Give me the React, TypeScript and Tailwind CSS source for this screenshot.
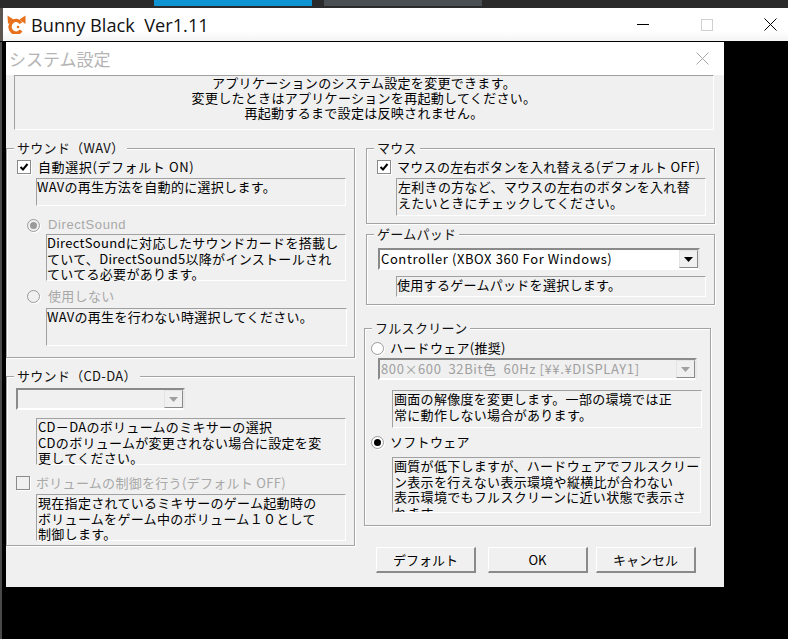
const font = { fontFamily: '"Noto Sans CJK JP", "Liberation Sans", sans-serif' };

function Logo() {
  return (
    <svg width="19" height="19" viewBox="0 0 19 19" className="-mt-[1px] shrink-0">
      <path d="M0.5 0.5 L6.5 4.5 L1 9 Z" fill="#e8701a" />
      <path d="M18.5 0.5 L18.5 9 L12.5 4.5 Z" fill="#e8701a" />
      <path d="M14 8.2 A6 6.4 0 1 0 14 15.3" fill="none" stroke="#e8701a" strokeWidth="3.4" />
      <circle cx="11" cy="12" r="1.3" fill="#e8701a" />
    </svg>
  );
}

function Group({ title, className, children }: { title: string; className: string; children?: React.ReactNode }) {
  return (
    <section className={`border border-[#a3a3a3] shadow-[inset_1px_1px_0_#fff,1px_1px_0_#fff] ${className}`}>
      <div className="-mt-[9px] ml-[7px] w-fit bg-[#f0f0f0] px-[3px] text-[13px] leading-[16px] tracking-[0.3px] text-[#111]">{title}</div>
      {children}
    </section>
  );
}

function Desc({ className, children }: { className: string; children: React.ReactNode }) {
  return (
    <div className={`whitespace-nowrap border-l border-t border-[#a0a0a0] border-r-white border-b-white border-r border-b text-[13px] leading-[15.5px] tracking-[0.3px] text-black ${className}`}>
      {children}
    </div>
  );
}

function Check({ checked, disabled }: { checked?: boolean; disabled?: boolean }) {
  return (
    <span className={`flex h-[14px] w-[14px] shrink-0 items-center justify-center border border-[#8a8a8a] ${disabled ? 'bg-[#f0f0f0]' : 'bg-white'} shadow-[1px_1px_0_#fff]`}>
      {checked && (
        <svg width="10" height="10" viewBox="0 0 10 10">
          <path d="M1.5 5 L4 7.5 L8.5 2" fill="none" stroke="#000" strokeWidth="2" />
        </svg>
      )}
    </span>
  );
}

function Radio({ on, disabled }: { on?: boolean; disabled?: boolean }) {
  return (
    <span className={`flex h-[13px] w-[13px] shrink-0 items-center justify-center rounded-full border border-[#9a9a9a] ${disabled ? 'bg-[#f0f0f0]' : 'bg-white'} shadow-[1px_1px_0_#fff]`}>
      {on && <span className={`h-[7px] w-[7px] rounded-full ${disabled ? 'bg-[#9a9a9a]' : 'bg-black'}`} />}
    </span>
  );
}

function Select({ className, value, disabled }: { className: string; value: string; disabled?: boolean }) {
  return (
    <div className={`flex h-[22px] items-center border-2 border-[#8a8a8a] border-r-[#e8e8e8] border-b-white ${disabled ? 'bg-[#f0f0f0] text-[#a0a0a0]' : 'bg-white text-black'} ${className}`}>
      <span className="flex-1 whitespace-pre pl-[1px] text-[13px] leading-[16px] tracking-[0.6px]">{value}</span>
      <span className="flex h-[18px] w-[19px] items-center justify-center border border-[#e4e4e4] border-r-[#8a8a8a] border-b-[#8a8a8a] bg-[#f0f0f0]">
        <svg width="9" height="5" viewBox="0 0 9 5">
          <path d="M0 0 H9 L4.5 5 Z" fill={disabled ? '#a0a0a0' : '#000'} />
        </svg>
      </span>
    </div>
  );
}

function Btn({ label, className }: { label: string; className?: string }) {
  return (
    <button className={`h-[26px] w-[100px] border border-[#fff] border-r-[#8a8a8a] border-b-[#8a8a8a] border-b-2 border-r-2 bg-[#f0f0f0] text-[13px] leading-[16px] text-black ${className ?? ''}`}>
      {label}
    </button>
  );
}

export default function App() {
  return (
    <div style={font} className="flex h-[639px] w-[788px] flex-col overflow-hidden bg-black">
      <div className="flex h-2 shrink-0 items-start bg-[#2a2a2a]">
        <div className="ml-[154px] h-[6px] w-[158px] bg-[#0e94d2]" />
        <div className="ml-3 h-[6px] w-[158px] bg-[#4a4f54]" />
      </div>
      <div className="h-[33px] shrink-0 bg-[#5a5550] pl-[3px]">
        <div className="flex h-full items-center bg-gradient-to-b from-white from-70% to-[#f4f4f4] pl-[4px]">
          <Logo />
          <span style={{ fontFamily: '"Open Sans", sans-serif' }} className="ml-[5px] whitespace-pre text-[18.2px] leading-6 text-[#111]">Bunny Black  Ver1.11</span>
          <div className="ml-auto flex items-center">
            <div className="mr-[52px] h-[1px] w-[12px] bg-black" />
            <div className="mr-[51px] h-[12px] w-[12px] border border-[#d0d0d0]" />
            <svg width="13" height="13" viewBox="0 0 13 13" className="mr-[11px]">
              <path d="M0.5 0.5 L12.5 12.5 M12.5 0.5 L0.5 12.5" stroke="#000" strokeWidth="1" />
            </svg>
          </div>
        </div>
      </div>
      <div className="flex min-h-0 flex-1 pt-[1px]">
        <div className="w-[2px] bg-[#4a4a4a]" />
        <div className="ml-[4px] flex h-[545px] w-[718px] flex-col bg-[#f0f0f0]">
          <div className="flex h-[33px] shrink-0 items-center justify-between bg-white pl-[3px] pr-[15px]">
            <span className="text-[17px] leading-6 text-[#b4b4b4]">システム設定</span>
            <svg width="13" height="13" viewBox="0 0 13 13">
              <path d="M0.5 0.5 L12.5 12.5 M12.5 0.5 L0.5 12.5" stroke="#a8a8a8" strokeWidth="1" />
            </svg>
          </div>
          <div className="ml-2 h-[55px] w-[700px] shrink-0 border-l border-t border-[#a0a0a0] border-r-white border-b-white border-r border-b text-center text-[13px] leading-[15px] tracking-[0.3px] text-black">
            <div className="-mt-[1px]">アプリケーションのシステム設定を変更できます。</div>
            <div>変更したときはアプリケーションを再起動してください。</div>
            <div>再起動するまで設定は反映されません。</div>
          </div>
          <div className="mt-[18px] flex">
            <div className="flex w-[349px] flex-col">
              <Group title="サウンド（WAV）" className="h-[210px]">
                <div className="ml-[10px] mt-[3px] flex h-[16px] items-center gap-[7px] text-[13px] tracking-[0.6px] text-black">
                  <Check checked />
                  <span className="leading-[16px]">自動選択(デフォルト ON)</span>
                </div>
                <Desc className="ml-[29px] mt-[3px] h-[28px] w-[310px]">WAVの再生方法を自動的に選択します。</Desc>
                <div className="ml-[20px] mt-[11px] flex h-[16px] items-center gap-[8px] text-[13px] text-[#a8a8a8]">
                  <Radio on disabled />
                  <span style={{ fontFamily: '"Liberation Sans", sans-serif' }} className="tracking-[0.6px]">DirectSound</span>
                </div>
                <Desc className="ml-[39px] mt-[1px] h-[47px] w-[300px]">
                  DirectSoundに対応したサウンドカードを搭載し<br />ていて、DirectSound5以降がインストールされ<br />ていてる必要があります。
                </Desc>
                <div className="ml-[20px] mt-[7px] flex h-[16px] items-center gap-[8px] text-[13px] tracking-[0.3px] text-[#a8a8a8]">
                  <Radio disabled />
                  <span>使用しない</span>
                </div>
                <Desc className="ml-[39px] mt-[4px] h-[38px] w-[301px]">WAVの再生を行わない時選択してください。</Desc>
              </Group>
              <Group title="サウンド（CD-DA）" className="mt-[18px] h-[170px]">
                <Select className="ml-[9px] mt-[4px] w-[169px]" value="" disabled />
                <Desc className="ml-[29px] mt-[8px] h-[47px] w-[310px] pl-[1px]">
                  CD－DAのボリュームのミキサーの選択<br />CDのボリュームが変更されない場合に設定を変<br />更してください。
                </Desc>
                <div className="ml-[9px] mt-[10px] flex h-[16px] items-center gap-[6px] overflow-hidden whitespace-nowrap text-[13px] tracking-[0.3px] text-[#a8a8a8]">
                  <Check disabled />
                  <span className="w-[251px] overflow-hidden">ボリュームの制御を行う(デフォルト OFF)</span>
                </div>
                <Desc className="ml-[29px] mt-[3px] h-[47px] w-[310px] pl-[1px]">
                  現在指定されているミキサーのゲーム起動時の<br />ボリュームをゲーム中のボリューム１０として<br />制御します。
                </Desc>
              </Group>
            </div>
            <div className="ml-[9px] flex w-[351px] flex-col">
              <Group title="マウス" className="ml-[2px] h-[76px] w-[349px]">
                <div className="ml-[10px] mt-[3px] flex h-[16px] items-center gap-[6px] whitespace-nowrap text-[13px] tracking-[0.3px] text-black">
                  <Check checked />
                  <span className="w-[304px] overflow-hidden">マウスの左右ボタンを入れ替える(デフォルト OFF)</span>
                </div>
                <Desc className="ml-[29px] mt-[3px] h-[38px] w-[310px] pl-[1px]">
                  左利きの方など、マウスの左右のボタンを入れ替<br />えたいときにチェックしてください。
                </Desc>
              </Group>
              <Group title="ゲームパッド" className="ml-[2px] mt-[10px] h-[71px] w-[349px]">
                <Select className="ml-[11px] mt-[6px] w-[322px]" value="Controller (XBOX 360 For Windows)" />
                <Desc className="ml-[29px] mt-[6px] h-[21px] w-[310px]">使用するゲームパッドを選択します。</Desc>
              </Group>
              <Group title="フルスクリーン" className="mt-[23px] h-[198px] w-[347px]">
                <div className="ml-[6px] mt-[4px] flex h-[16px] items-center gap-[6px] text-[13px] tracking-[0.3px] text-black">
                  <Radio />
                  <span>ハードウェア(推奨)</span>
                </div>
                <Select className="ml-[13px] mt-[2px] w-[319px]" value="800×600  32Bit色  60Hz [¥¥.¥DISPLAY1]" disabled />
                <Desc className="ml-[27px] mt-[10px] h-[38px] w-[310px] pl-[1px]">
                  画面の解像度を変更します。一部の環境では正<br />常に動作しない場合があります。
                </Desc>
                <div className="ml-[6px] mt-[6px] flex h-[16px] items-center gap-[6px] text-[13px] tracking-[0.3px] text-black">
                  <Radio on />
                  <span>ソフトウェア</span>
                </div>
                <Desc className="ml-[27px] mt-[7px] h-[56px] w-[309px] overflow-hidden pl-[1px]">
                  画質が低下しますが、ハードウェアでフルスクリー<br />ン表示を行えない表示環境や縦横比が合わない<br />表示環境でもフルスクリーンに近い状態で表示さ<br />れます。
                </Desc>
              </Group>
              <div className="ml-[12px] mt-[21px] flex">
                <Btn label="デフォルト" />
                <Btn label="OK" className="ml-[12px]" />
                <Btn label="キャンセル" className="ml-[8px]" />
              </div>
            </div>
          </div>
        </div>
      </div>
    </div>
  );
}
